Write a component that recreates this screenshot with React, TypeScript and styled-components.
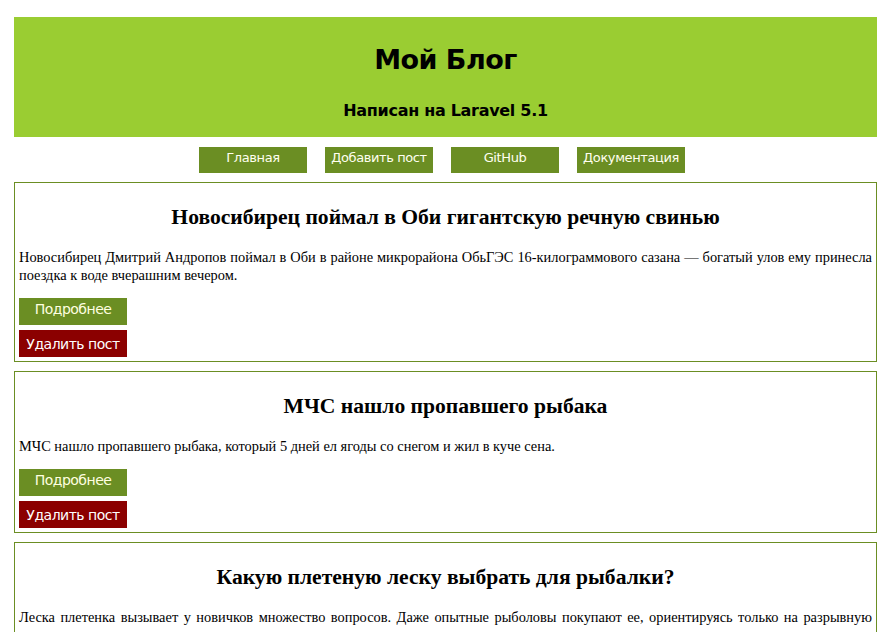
import React from "react";
import styled, { createGlobalStyle } from "styled-components";

const GlobalStyle = createGlobalStyle`
  html, body { margin: 0; padding: 0; background: #ffffff; }
  body { font-family: "Liberation Serif", "Times New Roman", serif; color: #000; }
`;

const comic = `"DejaVu Sans", "Noto Sans", sans-serif`;

const Page = styled.div`
  padding: 17px 14px 0;
`;

const Header = styled.header`
  background: #9acd32;
  height: 120px;
  display: flex;
  flex-direction: column;
  align-items: center;
  font-family: ${comic};
`;

const Title = styled.h1`
  margin: 26px 0 0;
  font-size: 27px;
  line-height: 34px;
  font-weight: bold;
  letter-spacing: -0.5px;
`;

const Subtitle = styled.h3`
  margin: 24px 0 0;
  font-size: 16px;
  line-height: 20px;
  font-weight: bold;
  letter-spacing: -0.3px;
`;

const Nav = styled.nav`
  display: flex;
  justify-content: center;
  gap: 18px;
  margin: 10px 0 9px;
  padding-right: 7px;
`;

const NavButton = styled.a`
  width: 108px;
  height: 26px;
  background: #6b8e23;
  color: #fffff0;
  font-family: ${comic};
  font-size: 13px;
  letter-spacing: -0.4px;
  text-align: center;
  line-height: 22px;
  text-decoration: none;
  white-space: nowrap;
`;

const Post = styled.article`
  border: 1px solid #6b8e23;
  padding: 4px;
  margin-bottom: 9px;
  display: flex;
  flex-direction: column;
`;

const PostTitle = styled.h2`
  margin: 18px 0;
  font-size: 21.6px;
  line-height: 25px;
  text-align: center;
  font-weight: bold;
`;

const PostText = styled.p`
  margin: 0 0 14px;
  font-size: 14.4px;
  line-height: 18px;
  text-align: justify;
`;

const ActionButton = styled.a<{ $variant: "more" | "delete" }>`
  display: block;
  width: 108px;
  height: 27px;
  margin-bottom: ${(p) => (p.$variant === "more" ? "5px" : "0")};
  background: ${(p) => (p.$variant === "more" ? "#6b8e23" : "#8b0000")};
  color: ${(p) => (p.$variant === "more" ? "#ffffe0" : "#ffffff")};
  font-family: ${comic};
  font-size: 14px;
  letter-spacing: -0.5px;
  text-align: center;
  line-height: ${(p) => (p.$variant === "more" ? "22px" : "28px")};
  text-decoration: none;
  white-space: nowrap;
`;

const posts = [
  {
    title: "Новосибирец поймал в Оби гигантскую речную свинью",
    text: "Новосибирец Дмитрий Андропов поймал в Оби в районе микрорайона ОбьГЭС 16-килограммового сазана — богатый улов ему принесла поездка к воде вчерашним вечером.",
  },
  {
    title: "МЧС нашло пропавшего рыбака",
    text: "МЧС нашло пропавшего рыбака, который 5 дней ел ягоды со снегом и жил в куче сена.",
  },
  {
    title: "Какую плетеную леску выбрать для рыбалки?",
    text: "Леска плетенка вызывает у новичков множество вопросов. Даже опытные рыболовы покупают ее, ориентируясь только на разрывную нагрузку, не задумываясь о других характеристиках.",
  },
];

export default function App() {
  return (
    <>
      <GlobalStyle />
      <Page>
        <Header>
          <Title>Мой Блог</Title>
          <Subtitle>Написан на Laravel 5.1</Subtitle>
        </Header>
        <Nav>
          <NavButton href="#">Главная</NavButton>
          <NavButton href="#">Добавить пост</NavButton>
          <NavButton href="#">GitHub</NavButton>
          <NavButton href="#">Документация</NavButton>
        </Nav>
        {posts.map((p) => (
          <Post key={p.title}>
            <PostTitle>{p.title}</PostTitle>
            <PostText>{p.text}</PostText>
            <ActionButton $variant="more" href="#">Подробнее</ActionButton>
            <ActionButton $variant="delete" href="#">Удалить пост</ActionButton>
          </Post>
        ))}
      </Page>
    </>
  );
}
